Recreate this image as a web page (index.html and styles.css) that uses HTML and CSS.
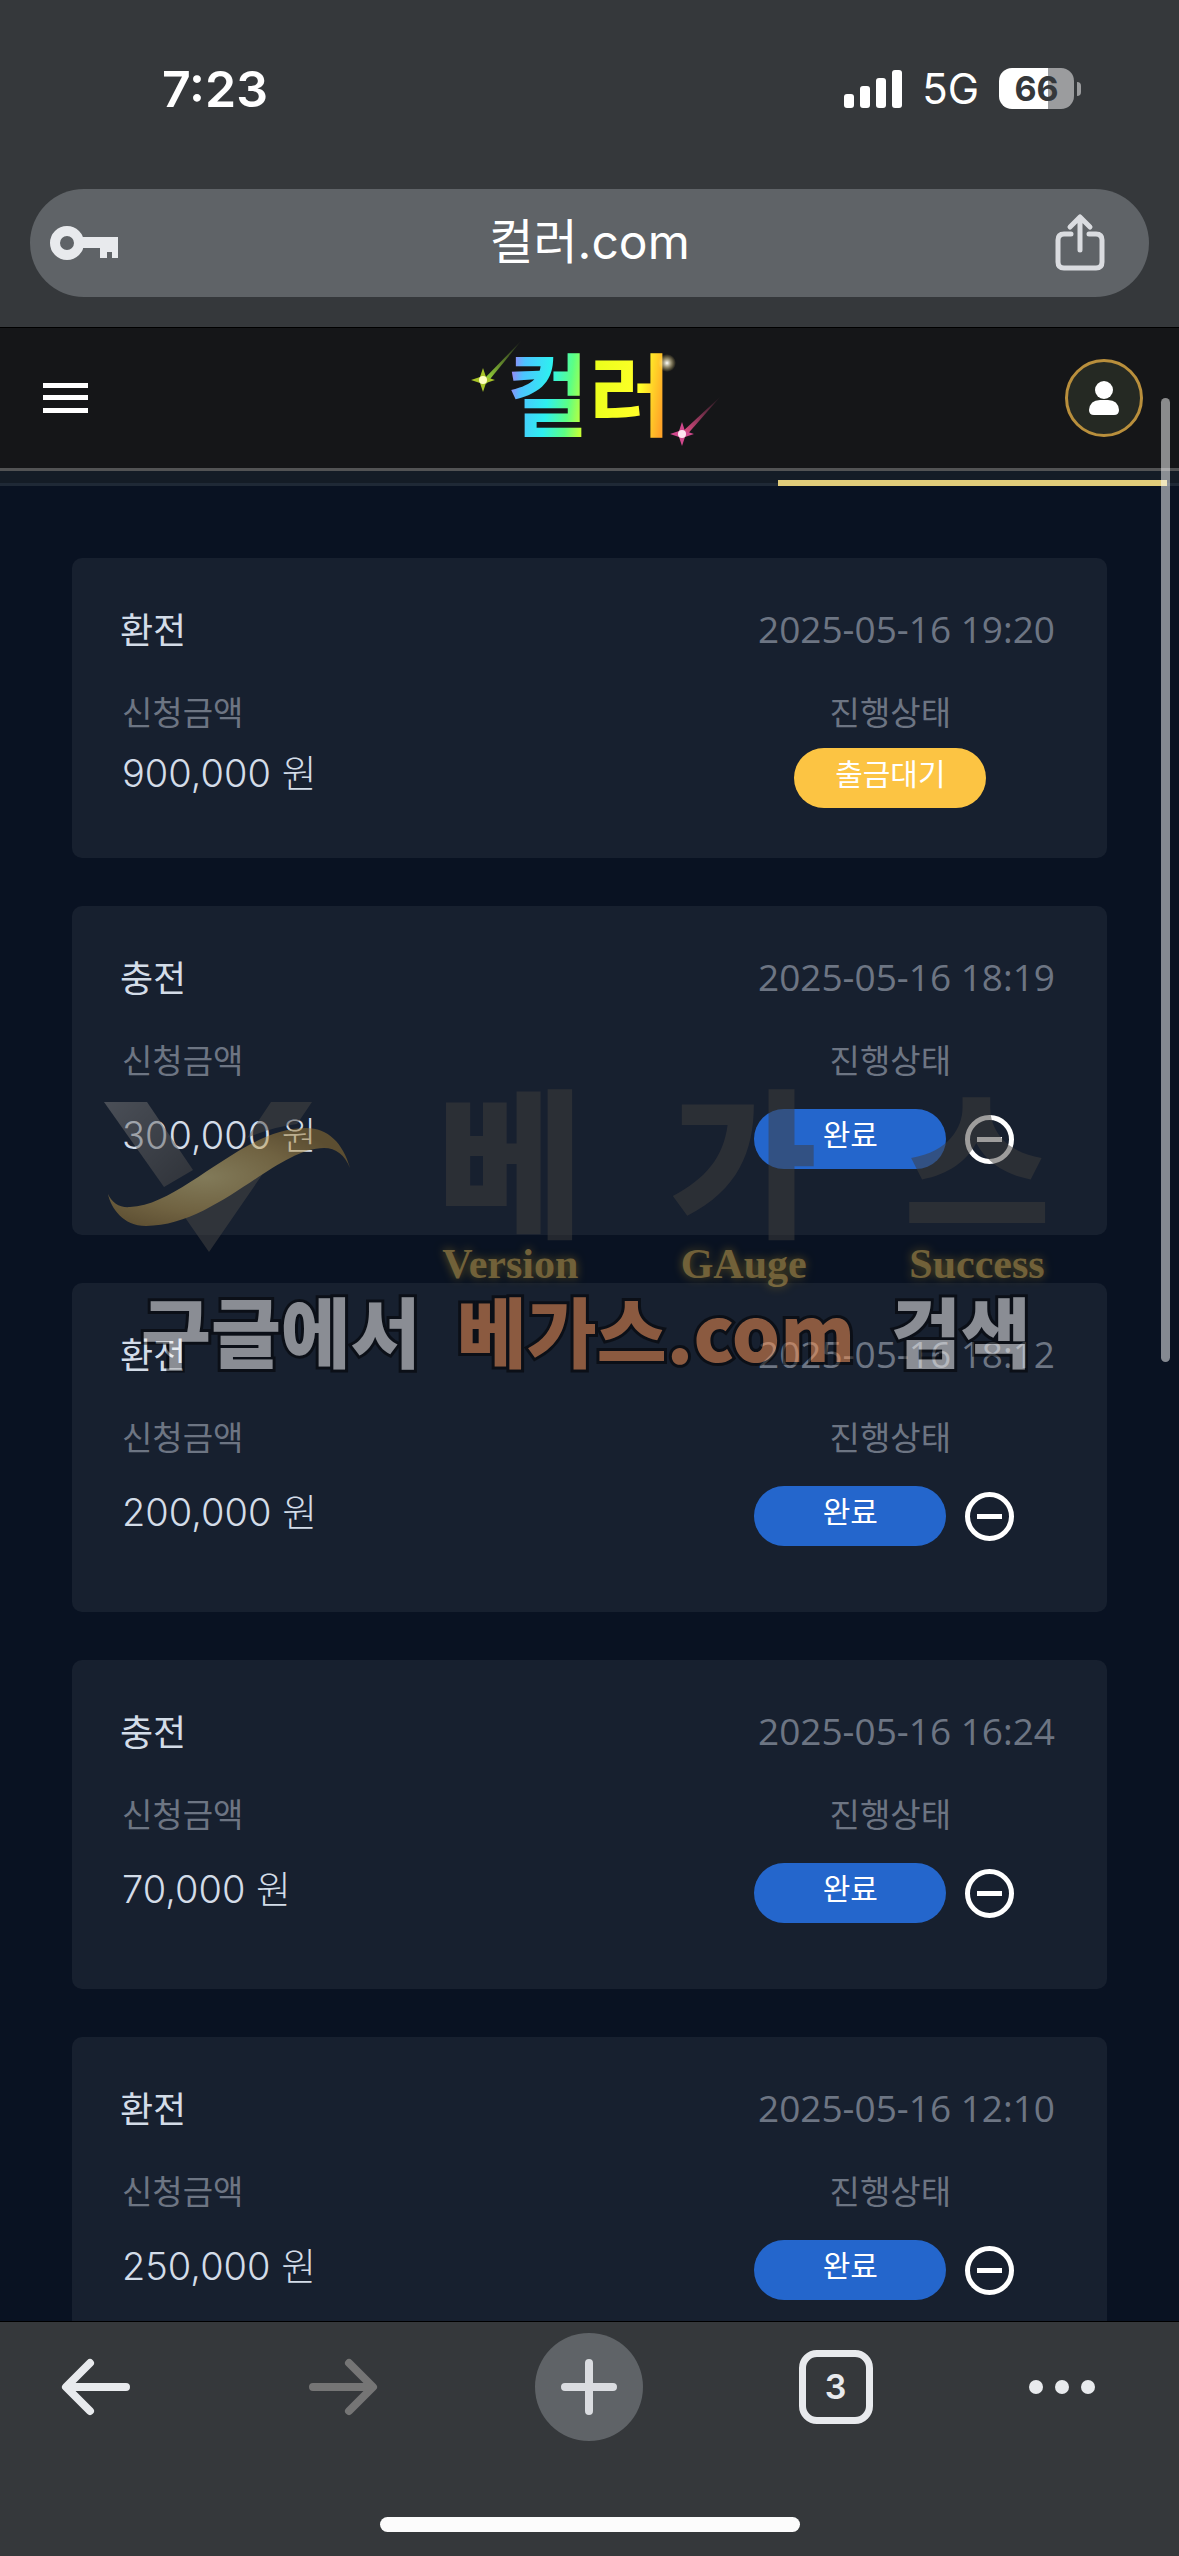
FILE: index.html
```html
<!DOCTYPE html>
<html lang="ko">
<head>
    <meta charset="UTF-8">
    <meta name="viewport" content="width=device-width, initial-scale=1.0">
    <title>컬러.com</title>
    <link rel="stylesheet" href="styles.css">
</head>
<body>
    <!-- Status bar -->
    <div class="status-bar">
        <span class="clock">7:23</span>
        <div class="status-right">
            <svg class="signal" width="58" height="38" viewBox="0 0 58 38" fill="#fff">
                <rect x="0" y="24" width="10" height="14" rx="3"/>
                <rect x="16" y="16" width="10" height="22" rx="3"/>
                <rect x="32" y="8" width="10" height="30" rx="3"/>
                <rect x="48" y="0" width="10" height="38" rx="3"/>
            </svg>
            <span class="network">5G</span>
            <div class="battery"><span class="battery-level">66</span></div>
        </div>
    </div>

    <!-- Address bar -->
    <div class="address-bar">
        <button class="icon-btn" aria-label="비밀번호">
            <svg width="70" height="36" viewBox="0 0 70 36">
                <circle cx="17" cy="18" r="12" fill="none" stroke="#e8eaed" stroke-width="10"/>
                <path d="M32 12H68V33H62V27H57V33H50V23H32Z" fill="#e8eaed"/>
            </svg>
        </button>
        <input class="address" type="text" value="컬러.com" aria-label="주소">
        <button class="icon-btn" aria-label="공유">
            <svg width="50" height="58" viewBox="0 0 50 58" fill="none" stroke="#dadce0" stroke-width="5" stroke-linecap="round" stroke-linejoin="round">
                <path d="M16 20H9Q3 20 3 26V48Q3 54 9 54H41Q47 54 47 48V26Q47 20 41 20H34"/>
                <path d="M25 36V4M15 13L25 3L35 13"/>
            </svg>
        </button>
    </div>

    <div class="page">
        <header class="header">
            <button class="icon-btn menu-btn" aria-label="메뉴">
                <svg width="45" height="30" viewBox="0 0 45 30" fill="#fff">
                    <rect width="45" height="5"/>
                    <rect y="12" width="45" height="5"/>
                    <rect y="25" width="45" height="5"/>
                </svg>
            </button>
            <a class="logo" href="#" aria-label="컬러">
                <svg width="264" height="136" viewBox="0 -12 264 136">
                    <defs>
                        <linearGradient id="rainbow" x1="0" y1="0" x2="1" y2="0.1">
                            <stop offset="0" stop-color="#e04cf0"/>
                            <stop offset="0.14" stop-color="#4cc4ff"/>
                            <stop offset="0.3" stop-color="#2ef0f0"/>
                            <stop offset="0.43" stop-color="#5cff84"/>
                            <stop offset="0.56" stop-color="#eaff1c"/>
                            <stop offset="0.85" stop-color="#ffff28"/>
                            <stop offset="1" stop-color="#ffa428"/>
                        </linearGradient>
                        <linearGradient id="greenTrail" x1="0" y1="1" x2="1" y2="0">
                            <stop offset="0" stop-color="#a4e83c"/>
                            <stop offset="1" stop-color="#a4e83c" stop-opacity="0"/>
                        </linearGradient>
                        <linearGradient id="pinkTrail" x1="0" y1="1" x2="1" y2="0">
                            <stop offset="0" stop-color="#f0508c"/>
                            <stop offset="1" stop-color="#f0508c" stop-opacity="0"/>
                        </linearGradient>
                        <radialGradient id="goldGlow"><stop offset="0" stop-color="#fff"/><stop offset="1" stop-color="#ffe070" stop-opacity="0"/></radialGradient>
                    </defs>
                    <text class="logo-text" x="128" y="87" text-anchor="middle" fill="url(#rainbow)">컬러</text>
                    <g transform="translate(-2 -14)">
                        <path d="M23 53L63 12L27 56Z" fill="url(#greenTrail)"/>
                        <path d="M24 40L27 49L36 52L27 55L24 64L21 55L12 52L21 49Z" fill="#a8c428"/>
                        <circle cx="24" cy="52" r="4" fill="#ffffc0"/>
                        <circle cx="208" cy="35" r="9" fill="url(#goldGlow)"/>
                        <path d="M222 105L262 68L226 109Z" fill="url(#pinkTrail)"/>
                        <path d="M223 94L226 103L235 106L226 109L223 118L220 109L211 106L220 103Z" fill="#d0488c"/>
                        <circle cx="223" cy="106" r="4" fill="#ffe4f0"/>
                    </g>
                </svg>
            </a>
            <button class="profile-btn" aria-label="내 정보">
                <svg width="30" height="34" viewBox="0 0 30 34" fill="#fff">
                    <circle cx="15" cy="9" r="9"/>
                    <path d="M0 29Q1 19 11 19H19Q29 19 30 29Q30 34 25 34H5Q0 34 0 29Z"/>
                </svg>
            </button>
        </header>
        <div class="tabs"><span class="tab"></span><span class="tab"></span><span class="tab active"></span></div>

        <main class="history">
            <article class="card">
                <div class="card-head"><h2>환전</h2><time>2025-05-16 19:20</time></div>
                <div class="card-labels"><span>신청금액</span><span class="center">진행상태</span></div>
                <div class="card-values">
                    <span class="amount">900,000 원</span>
                    <div class="state"><span class="badge waiting">출금대기</span></div>
                </div>
            </article>

            <article class="card">
                <div class="card-head"><h2>충전</h2><time>2025-05-16 18:19</time></div>
                <div class="card-labels"><span>신청금액</span><span class="center">진행상태</span></div>
                <div class="card-values tall">
                    <span class="amount">300,000 원</span>
                    <div class="state"><span class="badge">완료</span><button class="remove" aria-label="삭제"></button></div>
                </div>
            </article>

            <article class="card">
                <div class="card-head"><h2>환전</h2><time>2025-05-16 18:12</time></div>
                <div class="card-labels"><span>신청금액</span><span class="center">진행상태</span></div>
                <div class="card-values tall">
                    <span class="amount">200,000 원</span>
                    <div class="state"><span class="badge">완료</span><button class="remove" aria-label="삭제"></button></div>
                </div>
            </article>

            <article class="card">
                <div class="card-head"><h2>충전</h2><time>2025-05-16 16:24</time></div>
                <div class="card-labels"><span>신청금액</span><span class="center">진행상태</span></div>
                <div class="card-values tall">
                    <span class="amount">70,000 원</span>
                    <div class="state"><span class="badge">완료</span><button class="remove" aria-label="삭제"></button></div>
                </div>
            </article>

            <article class="card">
                <div class="card-head"><h2>환전</h2><time>2025-05-16 12:10</time></div>
                <div class="card-labels"><span>신청금액</span><span class="center">진행상태</span></div>
                <div class="card-values tall">
                    <span class="amount">250,000 원</span>
                    <div class="state"><span class="badge">완료</span><button class="remove" aria-label="삭제"></button></div>
                </div>
            </article>
        </main>

        <!-- Watermark over the list -->
        <div class="watermark">
            <div class="brand">
                <svg class="brand-mark" width="248" height="152" viewBox="104 1100 248 152">
                    <defs>
                        <linearGradient id="arm" x1="0" y1="0" x2="1" y2="1">
                            <stop offset="0" stop-color="#7e7e80"/>
                            <stop offset="1" stop-color="#484644"/>
                        </linearGradient>
                        <radialGradient id="gold" cx="0.4" cy="0.5" r="0.6">
                            <stop offset="0" stop-color="#ecd484"/>
                            <stop offset="0.6" stop-color="#c8a454"/>
                            <stop offset="1" stop-color="#a07c34"/>
                        </radialGradient>
                    </defs>
                    <path d="M104 1101H147L193 1169L164 1186Z" fill="url(#arm)"/>
                    <path d="M271 1101H312L297 1123Q272 1126 247 1137Z" fill="#4a4846"/>
                    <path d="M184 1215Q222 1196 264 1171L209 1251Z" fill="#4a4846"/>
                    <path d="M108 1193C112 1202 120 1207 130 1206C182 1204 242 1127 306 1127C328 1127 343 1142 350 1167C345 1154 336 1147 324 1147C276 1147 216 1225 146 1225C123 1225 111 1207 108 1193Z" fill="url(#gold)"/>
                </svg>
                <div class="word"><b>베</b><i>Version</i></div>
                <div class="word"><b>가</b><i>GAuge</i></div>
                <div class="word"><b>스</b><i>Success</i></div>
            </div>
            <p class="slogan"><span>구글에서</span> <span class="site">베가스.com</span> <span>검색</span></p>
        </div>
        <div class="scrollbar"></div>
    </div>

    <!-- Browser toolbar -->
    <div class="toolbar">
        <nav class="toolbar-buttons">
            <button class="tool" aria-label="뒤로">
                <svg width="68" height="56" viewBox="0 0 68 56" fill="none" stroke="#e8eaed" stroke-width="8" stroke-linecap="round" stroke-linejoin="round"><path d="M64 28H5M28 4L4 28L28 52"/></svg>
            </button>
            <button class="tool" aria-label="앞으로">
                <svg width="68" height="56" viewBox="0 0 68 56" fill="none" stroke="#757575" stroke-width="8" stroke-linecap="round" stroke-linejoin="round"><path d="M4 28H63M40 4L64 28L40 52"/></svg>
            </button>
            <button class="tool new-tab" aria-label="새 탭">
                <svg width="56" height="56" viewBox="0 0 56 56" fill="none" stroke="#dadce0" stroke-width="8" stroke-linecap="round"><path d="M28 4V52M4 28H52"/></svg>
            </button>
            <button class="tool"><span class="tab-count">3</span></button>
            <button class="tool more" aria-label="더보기">
                <svg width="68" height="16" viewBox="0 0 68 16" fill="#e8eaed"><circle cx="8" cy="8" r="7"/><circle cx="34" cy="8" r="7"/><circle cx="60" cy="8" r="7"/></svg>
            </button>
        </nav>
        <div class="home-indicator"></div>
    </div>
</body>
</html>
```
FILE: styles.css
```css
* {
    box-sizing: border-box;
}

body {
    margin: 0;
    height: 100vh;
    display: flex;
    flex-direction: column;
    overflow: hidden;
    background-color: #35383b;
    font-family: "Open Sans", "Noto Sans CJK KR", sans-serif;
    color: #d3dce8;
}

button {
    padding: 0;
    border: none;
    background: none;
    display: flex;
    align-items: center;
    justify-content: center;
    cursor: pointer;
}

svg {
    display: block;
    overflow: visible;
}

/* Status bar */
.status-bar {
    height: 189px;
    padding: 0 98px 12px 162px;
    display: flex;
    align-items: center;
    justify-content: space-between;
    font-family: Inter, sans-serif;
    color: #fff;
}

.clock {
    font-size: 50px;
    font-weight: 600;
}

.status-right {
    display: flex;
    align-items: center;
    gap: 20px;
}

.network {
    font-size: 42px;
}

.battery {
    position: relative;
    width: 75px;
    height: 41px;
    border-radius: 13px;
    background: linear-gradient(to right, #fff 66%, #9b9c9e 66%);
    display: flex;
    align-items: center;
    justify-content: center;
    margin-right: 7px;
}

.battery::after {
    content: "";
    position: absolute;
    right: -7px;
    width: 4px;
    height: 14px;
    border-radius: 0 4px 4px 0;
    background-color: #9b9c9e;
}

.battery-level {
    font-size: 34px;
    font-weight: 700;
    color: #35383b;
}

/* Address bar */
.address-bar {
    flex: none;
    height: 108px;
    margin: 0 30px 30px;
    padding: 0 44px 0 20px;
    display: flex;
    align-items: center;
    border-radius: 54px;
    background-color: #5f6367;
}

.address {
    flex: 1;
    min-width: 0;
    padding: 0 0 10px 4px;
    border: none;
    outline: none;
    background: none;
    text-align: center;
    font-family: Inter, "Noto Sans CJK KR", sans-serif;
    font-size: 48px;
    color: #fff;
}

/* Page */
.page {
    position: relative;
    flex: 1;
    min-height: 0;
    overflow: hidden;
    border-top: 1px solid #000;
    border-bottom: 1px solid #000;
    background-color: #091222;
}

.header {
    height: 143px;
    padding: 0 36px 0 43px;
    display: grid;
    grid-template-columns: 1fr auto 1fr;
    align-items: center;
    background-color: #151618;
    border-bottom: 3px solid #525354;
}

.menu-btn {
    justify-self: start;
}

.logo-text {
    font-family: "Noto Sans CJK KR", sans-serif;
    font-size: 90px;
    font-weight: 700;
}

.profile-btn {
    justify-self: end;
    width: 78px;
    height: 78px;
    border: 3px solid #b98f3c;
    border-radius: 50%;
    background-color: #252923;
}

.tabs {
    display: flex;
    height: 15px;
    padding-right: 12px;
    background-color: #141c26;
    border-bottom: 3px solid #1f2936;
}

.tab {
    flex: 1;
}

.tab.active {
    height: 15px;
    border-bottom: 6px solid #e1cc7b;
}

/* History cards */
.history {
    padding: 72px 72px 0;
    display: flex;
    flex-direction: column;
    gap: 48px;
}

.card {
    padding: 46px 48px 55px;
    border-radius: 10px;
    background-color: #17202f;
}

.card-head {
    height: 48px;
    display: flex;
    align-items: center;
    justify-content: space-between;
}

.card h2 {
    margin: 0;
    font-size: 36px;
    font-weight: 400;
}

.card time {
    padding-right: 4px;
    font-size: 37px;
    color: #6d7583;
}

.card-labels,
.card-values {
    display: grid;
    grid-template-columns: 64% 36%;
    align-items: center;
    padding-left: 2px;
}

.card-labels {
    height: 40px;
    margin: 35px 0 16px;
    font-size: 33px;
    color: #6d7583;
}

.center {
    text-align: center;
}

.card-values {
    height: 60px;
}

.card-values.tall {
    height: 89px;
    padding-top: 7px;
}

.amount {
    padding-bottom: 14px;
    font-family: Inter, "Noto Sans CJK KR", sans-serif;
    font-size: 38px;
    font-weight: 300;
}

.state {
    display: flex;
    align-items: center;
    justify-content: center;
    gap: 19px;
}

.badge {
    width: 192px;
    height: 60px;
    border-radius: 30px;
    background-color: #2466cc;
    color: #fff;
    font-size: 30px;
    line-height: 52px;
    text-align: center;
}

.badge.waiting {
    background-color: #fcc443;
}

.remove {
    width: 49px;
    height: 49px;
    margin-right: 12px;
    border: 5px solid #fff;
    border-radius: 50%;
}

.remove::before {
    content: "";
    width: 25px;
    height: 5px;
    background-color: #fff;
}

/* Watermark */
.watermark {
    position: absolute;
    top: 762px;
    left: 104px;
    right: 127px;
    opacity: 0.5;
}

.brand {
    display: flex;
    justify-content: space-between;
}

.brand-mark {
    margin-top: 11px;
}

.word {
    width: 150px;
    display: flex;
    flex-direction: column;
    align-items: center;
}

.word b {
    height: 152px;
    font-family: "Noto Sans CJK KR", sans-serif;
    font-size: 160px;
    font-weight: 900;
    line-height: 130px;
    color: #403e3c;
}

.word i {
    font-family: "Liberation Serif", serif;
    font-size: 42px;
    font-style: normal;
    font-weight: 700;
    line-height: 44px;
    color: #d8b050;
    text-shadow: 0 0 10px #b08c20;
}

.slogan {
    margin: 0 21px 0 37px;
    display: flex;
    justify-content: space-between;
    font-family: "Noto Sans CJK KR", sans-serif;
    font-size: 76px;
    font-weight: 900;
    line-height: 86px;
    white-space: nowrap;
    color: #fcfaf9;
    -webkit-text-stroke: 6px #000;
    paint-order: stroke fill;
}

.site {
    color: #ff9451;
}

.scrollbar {
    position: absolute;
    top: 70px;
    right: 9px;
    width: 9px;
    height: 964px;
    border-radius: 5px;
    background-color: rgba(255, 255, 255, 0.5);
}

/* Toolbar */
.toolbar {
    flex: none;
    height: 234px;
    padding: 11px 0 24px;
    display: flex;
    flex-direction: column;
    align-items: center;
    justify-content: space-between;
}

.toolbar-buttons {
    width: 100%;
    padding: 0 83px 0 42px;
    display: flex;
    justify-content: space-between;
}

.tool {
    width: 108px;
    height: 108px;
}

.tool.more {
    width: 68px;
}

.new-tab {
    border-radius: 50%;
    background-color: #5f6367;
}

.tab-count {
    width: 74px;
    height: 74px;
    border: 7px solid #e8eaed;
    border-radius: 18px;
    font-family: Inter, sans-serif;
    font-size: 34px;
    font-weight: 600;
    line-height: 60px;
    color: #e8eaed;
}

.home-indicator {
    width: 420px;
    height: 15px;
    border-radius: 8px;
    background-color: #fcfcfc;
}
```
